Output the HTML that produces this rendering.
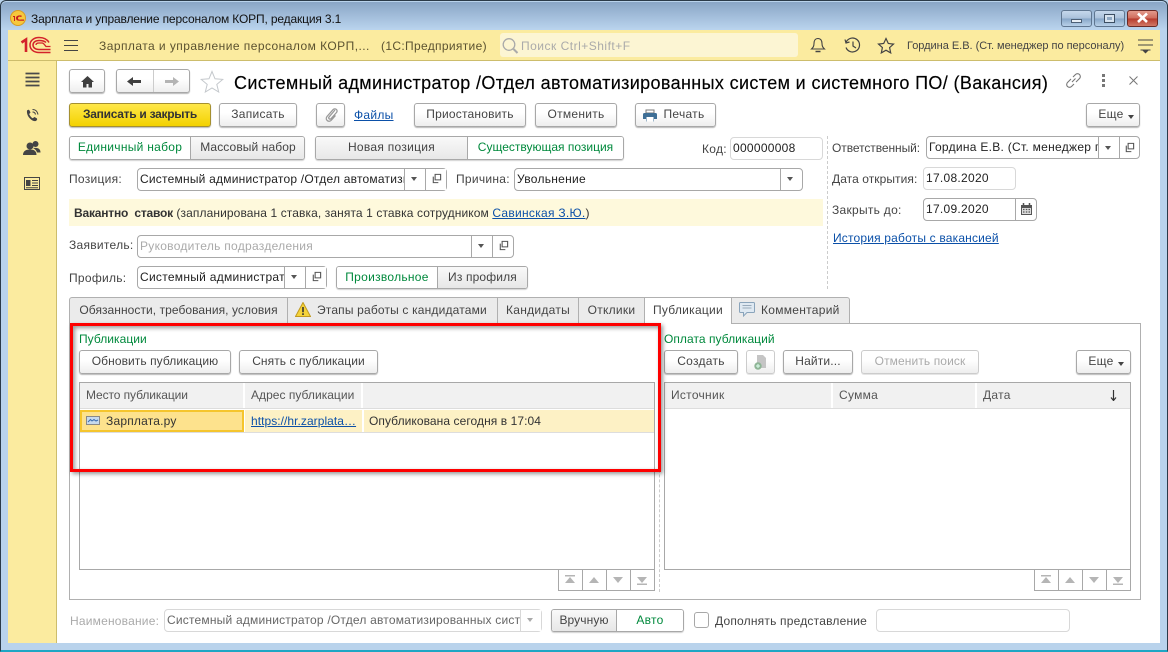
<!DOCTYPE html>
<html><head><meta charset="utf-8">
<style>
html,body{margin:0;padding:0;width:1168px;height:652px;overflow:hidden;background:#b9d3ec;font-family:"Liberation Sans",sans-serif;font-size:12px;color:#333}
div,span.a,a.a,svg.a{position:absolute;box-sizing:border-box}
.t{white-space:nowrap;line-height:16px;height:16px;letter-spacing:.28px;color:#444}
.v{color:#222}
.g{color:#00893c}
.l{color:#0b50a8;text-decoration:underline}
.b{height:24px;border:1px solid #a8a8a8;border-radius:3px;background:linear-gradient(#fff,#fff 40%,#eee);box-shadow:0 1px 1px rgba(0,0,0,.28);text-align:center;line-height:21px;white-space:nowrap;letter-spacing:.28px;color:#444}
.d{color:#aaa;border-color:#ccc;box-shadow:0 1px 0 rgba(0,0,0,.1)}
.i{border:1px solid #a8a8a8;border-radius:4px;background:#fff;height:23px;line-height:21px;padding-left:2px;white-space:nowrap;overflow:hidden;letter-spacing:.28px;color:#222}
.il{border-color:#d8d8d8}
.s{width:1px;background:#a8a8a8}
.ar{width:0;height:0;border-left:3.500px solid transparent;border-right:3.500px solid transparent;border-top:4px solid #555}
.gr{height:24px;background:linear-gradient(#f9f9f9,#e6e6e6);text-align:center;line-height:21px;letter-spacing:.28px;color:#444;white-space:nowrap}
.wh{height:24px;background:#fff;text-align:center;line-height:21px;letter-spacing:.28px;color:#00893c;white-space:nowrap}
.box{border:1px solid #a8a8a8;border-radius:3px;height:24px;box-shadow:0 1px 1px rgba(0,0,0,.18);overflow:hidden}
.tab{top:297px;height:26px;background:#ebebeb;border:1px solid #b0b0b0;border-left:0;border-bottom:0;text-align:center;line-height:25px;letter-spacing:.28px;color:#444;white-space:nowrap}
.h{background:#f1f1f1;height:25px;top:383px;line-height:24px;padding-left:6px;letter-spacing:.28px;color:#555;white-space:nowrap;border-right:2px solid #fff}
.sb{top:569px;height:22px;border:1px solid #a8a8a8;background:#fff}
</style></head><body>
<svg width="0" height="0" style="position:absolute"><defs>
<symbol id="op" viewBox="0 0 12 12"><path d="M4.500 1.500h6v6h-6zM2.500 4v6.500H8" fill="none" stroke="#555" stroke-width="1.200"/></symbol>
<symbol id="top" viewBox="0 0 12 10"><path d="M1 0h10v1.500H1zM6 2l5 6H1z" fill="#b5b5b5"/></symbol>
<symbol id="up" viewBox="0 0 12 10"><path d="M6 2l5 6H1z" fill="#b5b5b5"/></symbol>
<symbol id="dn" viewBox="0 0 12 10"><path d="M6 8L1 2h10z" fill="#b5b5b5"/></symbol>
<symbol id="bot" viewBox="0 0 12 10"><path d="M1 8.500h10V10H1zM6 8L1 2h10z" fill="#b5b5b5"/></symbol>
</defs></svg>

<!-- window frame -->
<div style="left:0;top:0;width:1168px;height:652px;background:#b9d3ec;border:1px solid #2b3a48;border-radius:6px 6px 0 0;border-bottom:2px solid #1ea6c4"></div>
<div style="left:1px;top:2px;width:1166px;height:28px;background:linear-gradient(#8aa6c6,#bad4ee);border-radius:5px 5px 0 0"></div>
<svg class="a" style="left:10px;top:10px" width="16" height="16" viewBox="0 0 16 16"><circle cx="8" cy="8" r="7.500" fill="#f6c83c" stroke="#d89a20"/><path d="M3 6h2v5H4V7H3zM6 8c0-3 5-3 6-2l-1 1c-1-.7-3-.5-3 1.200s2 1.500 3 1.300h3v1.200H9c-2 0-3-1-3-2.700z" fill="#c81e1e"/></svg>
<div class="t" style="left:31px;top:11px;color:#111;letter-spacing:-.15px">Зарплата и управление персоналом КОРП, редакция 3.1</div>
<div style="left:1061px;top:10px;width:31px;height:17px;border:1px solid #5f7690;border-radius:3px;background:linear-gradient(#c6d8ec 0,#a9c0da 50%,#86a5c7 51%,#b8d0e8)"></div>
<div style="left:1071px;top:19px;width:11px;height:4px;background:#e8eef5;border:1px solid #4d6076"></div>
<div style="left:1094px;top:10px;width:31px;height:17px;border:1px solid #5f7690;border-radius:3px;background:linear-gradient(#c6d8ec 0,#a9c0da 50%,#86a5c7 51%,#b8d0e8)"></div>
<div style="left:1104px;top:14px;width:11px;height:9px;border:1px solid #3c4e62;background:#d7e3ef"><div style="left:2px;top:2px;width:5px;height:3px;background:#8fa9c4"></div></div>
<div style="left:1127px;top:10px;width:31px;height:17px;border:1px solid #6b2a25;border-radius:3px;background:linear-gradient(#e39a8c 0,#cf6a5a 50%,#b63a2c 51%,#d27866)"></div>
<svg class="a" style="left:1136px;top:12px" width="13" height="12" viewBox="0 0 13 12"><path d="M2 1.500l9 8.500M11 1.500L2 10" stroke="#fff" stroke-width="2.600" fill="none"/></svg>

<!-- top yellow bar -->
<div style="left:8px;top:30px;width:1152px;height:31px;background:#fbeb9f;border-bottom:1px solid #cdbd6c"></div>
<svg class="a" style="left:20px;top:36px" width="32" height="18" viewBox="0 0 32 18"><g fill="none" stroke="#d3222a"><path d="M1.500 6.500L6 3.500V16" stroke-width="2.600"/><path d="M29 6.500C27 3 23 1.500 19 1.500c-5 0-9 3-9 7.500s4 7.500 9 7.500h11.500" stroke-width="1.500"/><path d="M26 6.500C24.500 5 22 4.500 19 4.500c-3.500 0-6 1.800-6 4.500s2.500 4.500 6 4.500h11.500" stroke-width="1.500"/><path d="M16 9c0-1.500 1.500-2 3-2h3c1.500 0 2 1 4 3.500h4.500" stroke-width="1.300"/></g></svg>
<svg class="a" style="left:63px;top:39px" width="16" height="13" viewBox="0 0 16 13"><path d="M1 1.500h14M1 6.500h14M1 11.500h14" stroke="#444" stroke-width="1.100"/></svg>
<div class="t" style="left:99px;top:38px;color:#5b5230;letter-spacing:.45px">Зарплата и управление персоналом КОРП,...</div>
<div class="t" style="left:381px;top:38px;color:#5b5230;letter-spacing:.33px">(1С:Предприятие)</div>
<div style="left:500px;top:33px;width:298px;height:24px;background:#fcf5d3;border-radius:3px"></div>
<svg class="a" style="left:501px;top:37px" width="18" height="17" viewBox="0 0 18 17"><circle cx="8" cy="7.500" r="5.800" fill="none" stroke="#aaa" stroke-width="1.300"/><path d="M12.500 12l4 4" stroke="#aaa" stroke-width="2"/></svg>
<div class="t" style="left:521px;top:38px;color:#aaa;letter-spacing:.5px">Поиск Ctrl+Shift+F</div>
<svg class="a" style="left:810px;top:37px" width="16" height="17" viewBox="0 0 16 17"><path d="M8 1.500c-3 0-4 2.500-4 5 0 3-1 4-2.500 5.500h13C13 10.500 12 9.500 12 6.500c0-2.500-1-5-4-5z" fill="none" stroke="#444" stroke-width="1.100"/><path d="M5.500 14.500h5" stroke="#444" stroke-width="1.500"/></svg>
<svg class="a" style="left:844px;top:37px" width="17" height="17" viewBox="0 0 17 17"><path d="M2.200 5A7 7 0 1 1 2 10.500M1 2.500L2 6l3.500-1M9 4.500V9l3 2" fill="none" stroke="#444" stroke-width="1.200"/></svg>
<svg class="a" style="left:877px;top:37px" width="18" height="17" viewBox="0 0 18 17"><path d="M9 1.500l2.300 5 5.200.6-3.900 3.500 1.100 5.300L9 13.200l-4.700 2.700 1.100-5.300L1.500 7.100l5.200-.6z" fill="none" stroke="#444" stroke-width="1.200"/></svg>
<div class="t" style="left:907px;top:38px;font-size:11px;color:#444;letter-spacing:-.02px">Гордина Е.В. (Ст. менеджер по персоналу)</div>
<svg class="a" style="left:1137px;top:38px" width="17" height="16" viewBox="0 0 17 16"><path d="M1 2h15M1 7h15M3.500 12h10" stroke="#444" stroke-width="1"/><path d="M5.500 12.500h6L8.500 15.500z" fill="#444"/></svg>

<!-- sidebar & content -->
<div style="left:8px;top:61px;width:49px;height:582px;background:#fbeb9f;border-right:1px solid #cdbd6c"></div>
<div style="left:57px;top:61px;width:1103px;height:582px;background:#fff"></div>
<svg class="a" style="left:25px;top:72px" width="15" height="15" viewBox="0 0 15 15"><path d="M.5 1.500h14M.5 5.500h14M.5 9.500h14M.5 13.500h14" stroke="#4a4a4a" stroke-width="1.800"/></svg>
<svg class="a" style="left:25px;top:108px" width="15" height="15" viewBox="0 0 15 15"><path d="M2 2.500c1-1 2-1 2.500 0l1 2-1.300 1.500c.5 1.500 2 3.500 3.500 4.200L9.500 9l2.200 1.200c.7.500.6 1.400-.2 2.300-1 1-3 1-5.500-1C3.500 9.500 1.500 6 2 2.500z" fill="#444"/><path d="M7.500 1.500c3 0 5 2 5.500 5M7.500 4c1.500 0 2.700 1 3 2.500" fill="none" stroke="#444" stroke-width="1.100"/></svg>
<svg class="a" style="left:23px;top:140px" width="18" height="16" viewBox="0 0 18 16"><circle cx="7" cy="6" r="3.500" fill="#444"/><circle cx="12.500" cy="4" r="3" fill="#444"/><path d="M0 15c0-4 3-5.500 7-5.500s6.500 1.500 6.500 5.500zM10 8c4-.5 7.500 0 7.500 4.500h-3.500C13.500 10.500 12 9 10 8z" fill="#444"/></svg>
<svg class="a" style="left:24px;top:177px" width="16" height="14" viewBox="0 0 16 14"><rect x=".5" y=".5" width="15" height="12" fill="#fbeb9f" stroke="#444"/><rect x="2" y="3" width="4.500" height="6" fill="#444"/><path d="M8 3.500h6M8 6h6M8 8.500h6M2 10.800h12" stroke="#444"/></svg>

<!-- nav -->
<div class="b" style="left:69px;top:69px;width:36px"></div>
<svg class="a" style="left:80px;top:75px" width="15" height="13" viewBox="0 0 15 13"><path d="M7.500 1L1 7h2v5.500h3.500V9h2v3.500H12V7h2z" fill="#3f3f3f"/></svg>
<div class="b" style="left:116px;top:69px;width:74px"></div>
<div class="s" style="left:153px;top:70px;height:22px;background:#ccc"></div>
<svg class="a" style="left:127px;top:76px" width="15" height="11" viewBox="0 0 15 11"><path d="M0 5.500L6 1v3h8v3H6v3z" fill="#3f3f3f"/></svg>
<svg class="a" style="left:164px;top:76px" width="15" height="11" viewBox="0 0 15 11"><path d="M15 5.500L9 1v3H1v3h8v3z" fill="#b4b4b4"/></svg>
<svg class="a" style="left:200px;top:70px" width="24" height="23" viewBox="0 0 24 23"><path d="M12 1.500l3 7.300 7.800.6-6 5 1.900 7.600L12 17.900l-6.700 4.100 1.900-7.600-6-5 7.800-.6z" fill="#fff" stroke="#c4c8cc"/></svg>
<div class="t" style="left:234px;top:72px;height:22px;line-height:22px;font-size:18px;color:#000;letter-spacing:.365px;-webkit-text-stroke:.15px #000">Системный администратор /Отдел автоматизированных систем и системного ПО/ (Вакансия)</div>
<svg class="a" style="left:1065px;top:72px" width="17" height="17" viewBox="0 0 17 17"><path d="M7 10l3.500-3.500M6 7L2.500 10.500a2.800 2.800 0 0 0 4 4L9 12M8 5l2.500-2.500a2.800 2.800 0 0 1 4 4L11 10" fill="none" stroke="#777" stroke-width="1.100"/></svg>
<div style="left:1102px;top:74px;width:3px;height:3px;background:#777"></div><div style="left:1102px;top:79px;width:3px;height:3px;background:#777"></div><div style="left:1102px;top:84px;width:3px;height:3px;background:#777"></div>
<svg class="a" style="left:1129px;top:76px" width="9" height="9" viewBox="0 0 9 9"><path d="M.5.500l8 8M8.500.500l-8 8" stroke="#777" stroke-width="1"/></svg>

<!-- command bar -->
<div class="b" style="left:69px;top:103px;width:142px;background:linear-gradient(#ffe84a,#f3d200);border-color:#a59030;color:#333;font-weight:bold;letter-spacing:-.28px">Записать и закрыть</div>
<div class="b" style="left:219px;top:103px;width:78px">Записать</div>
<div class="b" style="left:316px;top:103px;width:29px"></div>
<svg class="a" style="left:324px;top:107px" width="14" height="16" viewBox="0 0 14 16"><path d="M11 3L5 10c-1 1.500 1 3 2.200 1.500L12.500 5.500c2-2.500-1.500-5-3.500-2.800L3 9.500c-2.500 3.500 2 6.500 4.500 3.500l4-4.500" fill="none" stroke="#999" stroke-width="1.300"/></svg>
<div class="t l" style="left:354px;top:107px">Файлы</div>
<div class="b" style="left:414px;top:103px;width:112px;letter-spacing:.2px">Приостановить</div>
<div class="b" style="left:535px;top:103px;width:82px">Отменить</div>
<div class="b" style="left:635px;top:103px;width:81px;padding-left:17px">Печать</div>
<svg class="a" style="left:643px;top:109px" width="14" height="13" viewBox="0 0 14 13"><path d="M3 1h8v3H3z" fill="#fff" stroke="#777"/><path d="M0 5.500Q0 4 1.500 4h11Q14 4 14 5.500V10h-3v2.500H3V10H0z" fill="#3f6f96"/><rect x="3.500" y="8" width="7" height="4.500" fill="#fff"/></svg>
<div class="b" style="left:1086px;top:103px;width:54px;padding-right:4px">Еще</div>
<div class="ar" style="left:1128px;top:115px;border-top-color:#444"></div>

<!-- row 3 -->
<div class="box" style="left:69px;top:136px;width:236px"><div class="wh" style="left:0;top:0;width:120px">Единичный набор</div><div class="gr" style="left:120px;top:0;width:115px;border-left:1px solid #a8a8a8;letter-spacing:.1px">Массовый набор</div></div>
<div class="box" style="left:315px;top:136px;width:309px"><div class="gr" style="left:0;top:0;width:152px;border-right:1px solid #a8a8a8">Новая позиция</div><div class="wh" style="left:152px;top:0;width:155px;letter-spacing:0">Существующая позиция</div></div>
<div class="t" style="left:702px;top:141px">Код:</div>
<div class="i il" style="left:730px;top:137px;width:93px">000000008</div>
<div style="left:827px;top:136px;width:0;height:153px;border-left:1px dashed #ccc"></div>
<div class="t" style="left:832px;top:140px;letter-spacing:-.07px">Ответственный:</div>
<div class="i" style="left:926px;top:136px;width:214px;height:23px">Гордина Е.В. (Ст. менеджер г</div>
<div class="s" style="left:1098px;top:137px;height:21px"></div><div class="s" style="left:1119px;top:137px;height:21px"></div>
<div class="ar" style="left:1105px;top:146px"></div><svg class="a" style="left:1124px;top:142px" width="11" height="11"><use href="#op"/></svg>

<div class="t" style="left:69px;top:171px">Позиция:</div>
<div class="i" style="left:137px;top:168px;width:310px;letter-spacing:.22px">Системный администратор /Отдел автоматизи</div>
<div style="left:404px;top:169px;width:42px;height:21px;background:#fff;border-left:1px solid #a8a8a8"></div><div class="s" style="left:425px;top:169px;height:21px"></div>
<div class="ar" style="left:411px;top:177px"></div><svg class="a" style="left:431px;top:173px" width="11" height="11"><use href="#op"/></svg>
<div class="t" style="left:456px;top:171px">Причина:</div>
<div class="i" style="left:514px;top:168px;width:289px">Увольнение</div>
<div class="s" style="left:780px;top:169px;height:21px"></div><div class="ar" style="left:787px;top:177px"></div>
<div class="t" style="left:832px;top:171px;letter-spacing:.07px">Дата открытия:</div>
<div class="i il" style="left:923px;top:167px;width:93px">17.08.2020</div>
<div class="t" style="left:832px;top:202px">Закрыть до:</div>
<div class="i" style="left:923px;top:198px;width:114px">17.09.2020</div>
<div class="s" style="left:1015px;top:199px;height:21px"></div>
<svg class="a" style="left:1021px;top:203px" width="11" height="12" viewBox="0 0 11 12"><path d="M0 2h11v10H0z" fill="#555"/><path d="M1 5h9v6H1z" fill="#ddd"/><path d="M2.500 0v3M8.500 0v3" stroke="#555" stroke-width="1.500"/><path d="M2 6.500h1.500M4.800 6.500h1.500M7.500 6.500H9M2 9h1.500M4.800 9h1.500M7.500 9H9" stroke="#555" stroke-width="1.200"/></svg>
<div class="t l" style="left:833px;top:230px;letter-spacing:.18px">История работы с вакансией</div>

<div style="left:69px;top:199px;width:754px;height:27px;background:#fef9dc"></div>
<div class="t" style="left:74px;top:205px;color:#333;letter-spacing:.1px"><b style="letter-spacing:-.2px">Вакантно&nbsp; ставок</b> (запланирована 1 ставка, занята 1 ставка сотрудником <span class="l" style="letter-spacing:.28px">Савинская З.Ю.</span>)</div>

<div class="t" style="left:69px;top:237px">Заявитель:</div>
<div class="i" style="left:137px;top:235px;width:377px;color:#aaa">Руководитель подразделения</div>
<div class="s" style="left:471px;top:236px;height:21px"></div><div class="s" style="left:492px;top:236px;height:21px"></div>
<div class="ar" style="left:478px;top:244px"></div><svg class="a" style="left:498px;top:240px" width="11" height="11"><use href="#op"/></svg>
<div class="t" style="left:69px;top:270px">Профиль:</div>
<div class="i" style="left:137px;top:266px;width:190px">Системный администрат</div>
<div style="left:284px;top:267px;width:42px;height:21px;background:#fff;border-left:1px solid #a8a8a8"></div><div class="s" style="left:305px;top:267px;height:21px"></div>
<div class="ar" style="left:291px;top:275px"></div><svg class="a" style="left:311px;top:271px" width="11" height="11"><use href="#op"/></svg>
<div class="box" style="left:336px;top:266px;width:192px;height:23px"><div class="wh" style="left:0;top:0;width:100px;height:22px">Произвольное</div><div class="gr" style="left:100px;top:0;width:90px;height:22px;border-left:1px solid #a8a8a8;letter-spacing:.15px">Из профиля</div></div>

<!-- tabs -->
<div style="left:69px;top:323px;width:1072px;height:277px;border:1px solid #b0b0b0;background:#fff"></div>
<div class="tab" style="left:69px;width:219px;border-left:1px solid #b0b0b0;border-radius:3px 0 0 0;letter-spacing:.06px">Обязанности, требования, условия</div>
<div class="tab" style="left:288px;width:210px;padding-left:29px;text-align:left;letter-spacing:.17px">Этапы работы с кандидатами</div>
<svg class="a" style="left:295px;top:302px" width="16" height="15" viewBox="0 0 16 15"><path d="M8 .5L15.500 14.500H.5z" fill="#f5d33a" stroke="#c09a20"/><path d="M8 5v5.200M8 11.300v1.700" stroke="#333" stroke-width="1.600"/></svg>
<div class="tab" style="left:498px;width:81px">Кандидаты</div>
<div class="tab" style="left:579px;width:66px">Отклики</div>
<div class="tab" style="left:645px;width:87px;height:27px;background:#fff;z-index:2">Публикации</div>
<div class="tab" style="left:732px;width:118px;padding-left:29px;text-align:left;border-radius:0 3px 0 0">Комментарий</div>
<svg class="a" style="left:739px;top:302px" width="16" height="15" viewBox="0 0 16 15"><path d="M1.500.5h13q1 0 1 1v8q0 1-1 1H8l-3.500 3.500v-3.500h-3q-1 0-1-1v-8q0-1 1-1z" fill="#dfe9f2" stroke="#8aa4bb"/><path d="M3.500 3.500h9M3.500 6h9" stroke="#9ab" stroke-width="1"/></svg>

<!-- left pane -->
<div class="t g" style="left:79px;top:331px;letter-spacing:.05px">Публикации</div>
<div class="b" style="left:79px;top:350px;width:152px;letter-spacing:.07px">Обновить публикацию</div>
<div class="b" style="left:239px;top:350px;width:139px;letter-spacing:.07px">Снять с публикации</div>
<div style="left:79px;top:382px;width:576px;height:188px;border:1px solid #a8a8a8;background:#fff"></div>
<div class="h" style="left:80px;width:165px;letter-spacing:-.09px">Место публикации</div>
<div class="h" style="left:245px;width:118px;letter-spacing:.03px">Адрес публикации</div>
<div class="h" style="left:363px;width:291px;border-right:0"></div>
<div style="left:80px;top:408px;width:574px;height:1px;background:#ddd"></div>
<div style="left:80px;top:410px;width:164px;height:22px;background:#fde28d;border:2px solid #f5c52d"></div>
<div style="left:245px;top:410px;width:117px;height:22px;background:#fdf1c5"></div>
<div style="left:364px;top:410px;width:290px;height:22px;background:#fdf1c5"></div>
<div style="left:80px;top:432px;width:574px;height:1px;background:#ddd"></div>
<svg class="a" style="left:86px;top:415px" width="14" height="11" viewBox="0 0 14 11"><rect x=".5" y="1.500" width="13" height="8" fill="#c6d9ee" stroke="#888"/><path d="M2 7l2.500-2.500L6 6l2-1.500L10 6l2-1" fill="none" stroke="#3b6db0"/></svg>
<div class="t v" style="left:106px;top:413px;color:#333;letter-spacing:.2px">Зарплата.ру</div>
<div class="t l" style="left:251px;top:413px;letter-spacing:.05px">https://hr.zarplata…</div>
<div class="t" style="left:369px;top:413px;color:#333;letter-spacing:.07px">Опубликована сегодня в 17:04</div>
<div class="sb" style="left:558px;width:97px"></div>
<div class="s" style="left:582px;top:569px;height:22px"></div><div class="s" style="left:606px;top:569px;height:22px"></div><div class="s" style="left:630px;top:569px;height:22px"></div>
<svg class="a" style="left:564px;top:575px" width="12" height="10"><use href="#top"/></svg><svg class="a" style="left:588px;top:575px" width="12" height="10"><use href="#up"/></svg><svg class="a" style="left:612px;top:575px" width="12" height="10"><use href="#dn"/></svg><svg class="a" style="left:636px;top:575px" width="12" height="10"><use href="#bot"/></svg>
<div style="left:659px;top:330px;width:0;height:262px;border-left:1px dashed #ccc"></div>

<!-- right pane -->
<div class="t g" style="left:664px;top:331px;letter-spacing:.05px">Оплата публикаций</div>
<div class="b" style="left:664px;top:350px;width:74px">Создать</div>
<div class="b d" style="left:746px;top:350px;width:29px"></div>
<svg class="a" style="left:753px;top:354px" width="15" height="16" viewBox="0 0 15 16"><path d="M4 1h6l3 3v10H4z" fill="#c5c5c5"/><circle cx="5" cy="12" r="3.700" fill="#8fb596"/><path d="M3 12h4M5 10v4" stroke="#dfe" stroke-width="1"/></svg>
<div class="b" style="left:783px;top:350px;width:70px;letter-spacing:.15px">Найти...</div>
<div class="b d" style="left:861px;top:350px;width:118px;letter-spacing:.1px">Отменить поиск</div>
<div class="b" style="left:1076px;top:350px;width:55px;padding-right:5px">Еще</div>
<div class="ar" style="left:1118px;top:362px;border-top-color:#444"></div>
<div style="left:664px;top:382px;width:467px;height:188px;border:1px solid #a8a8a8;background:#fff"></div>
<div class="h" style="left:665px;width:168px">Источник</div>
<div class="h" style="left:833px;width:144px">Сумма</div>
<div class="h" style="left:977px;width:153px;border-right:0">Дата</div>
<div style="left:665px;top:408px;width:465px;height:1px;background:#ddd"></div>
<svg class="a" style="left:1110px;top:390px" width="7" height="11" viewBox="0 0 7 11"><path d="M3.500 0v10M1 7.500l2.500 3 2.500-3" fill="none" stroke="#333" stroke-width="1.200"/></svg>
<div class="sb" style="left:1034px;width:97px"></div>
<div class="s" style="left:1058px;top:569px;height:22px"></div><div class="s" style="left:1082px;top:569px;height:22px"></div><div class="s" style="left:1106px;top:569px;height:22px"></div>
<svg class="a" style="left:1040px;top:575px" width="12" height="10"><use href="#top"/></svg><svg class="a" style="left:1064px;top:575px" width="12" height="10"><use href="#up"/></svg><svg class="a" style="left:1088px;top:575px" width="12" height="10"><use href="#dn"/></svg><svg class="a" style="left:1112px;top:575px" width="12" height="10"><use href="#bot"/></svg>

<!-- bottom -->
<div class="t" style="left:70px;top:613px;color:#aaa;letter-spacing:.2px">Наименование:</div>
<div class="i il" style="left:164px;top:609px;width:378px;color:#666;letter-spacing:.2px">Системный администратор /Отдел автоматизированных систе</div>
<div style="left:520px;top:610px;width:21px;height:21px;background:#fff;border-left:1px solid #d8d8d8"></div><div class="ar" style="left:527px;top:618px;border-top-color:#aaa"></div>
<div class="box" style="left:551px;top:609px;width:133px;height:23px"><div class="gr" style="left:0;top:0;width:65px;height:22px;border-right:1px solid #a8a8a8;letter-spacing:.1px">Вручную</div><div class="wh" style="left:65px;top:0;width:66px;height:22px">Авто</div></div>
<div style="left:694px;top:612px;width:15px;height:16px;border:1px solid #a8a8a8;border-radius:3px;background:#fff"></div>
<div class="t" style="left:715px;top:613px;letter-spacing:.2px">Дополнять представление</div>
<div class="i il" style="left:876px;top:609px;width:194px"></div>

<!-- red highlight -->
<div style="left:70px;top:323px;width:591px;height:149px;border:3px solid #fe0000;box-shadow:2px 2px 4px rgba(0,0,0,.4),inset 2px 2px 4px rgba(0,0,0,.4);z-index:5"></div>
</body></html>
